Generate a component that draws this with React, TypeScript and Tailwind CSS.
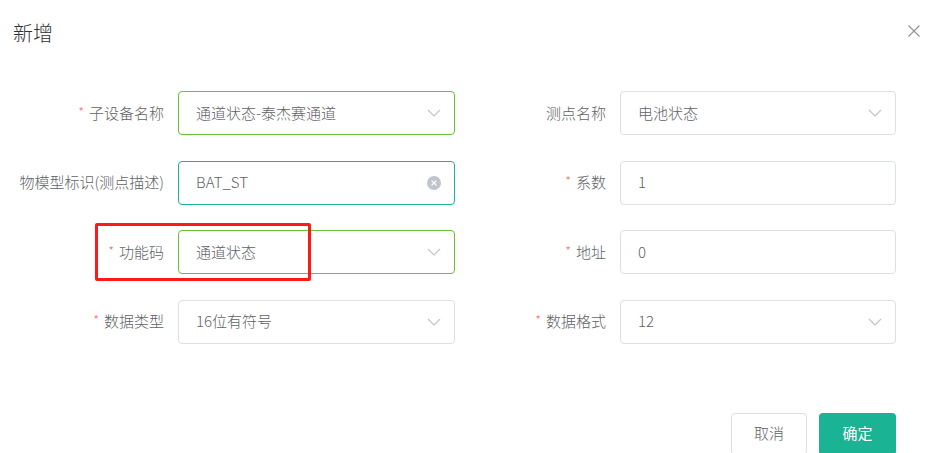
import React from 'react';

type Field = {
  label: string;
  value: string;
  required?: boolean;
  kind: 'select' | 'input' | 'clearable';
  border: string;
};

// left column then right column, row by row
const fields: Field[] = [
  { label: '子设备名称', value: '通道状态-泰杰赛通道', required: true, kind: 'select', border: 'border-[#67c23a]' },
  { label: '测点名称', value: '电池状态', kind: 'select', border: 'border-[#dcdfe6]' },
  { label: '物模型标识(测点描述)', value: 'BAT_ST', kind: 'clearable', border: 'border-[#1ab394]' },
  { label: '系数', value: '1', required: true, kind: 'input', border: 'border-[#dcdfe6]' },
  { label: '功能码', value: '通道状态', required: true, kind: 'select', border: 'border-[#67c23a]' },
  { label: '地址', value: '0', required: true, kind: 'input', border: 'border-[#dcdfe6]' },
  { label: '数据类型', value: '16位有符号', required: true, kind: 'select', border: 'border-[#dcdfe6]' },
  { label: '数据格式', value: '12', required: true, kind: 'select', border: 'border-[#dcdfe6]' },
];

const Chevron = () => (
  <svg width="14" height="8" viewBox="0 0 14 8" fill="none">
    <path d="M1 1l6 6 6-6" stroke="#c0c4cc" strokeWidth="1.2" />
  </svg>
);

const ClearIcon = () => (
  <svg width="14" height="14" viewBox="0 0 14 14">
    <circle cx="7" cy="7" r="7" fill="#c0c4cc" />
    <path d="M4.6 4.6l4.8 4.8M9.4 4.6l-4.8 4.8" stroke="#fff" strokeWidth="1.3" />
  </svg>
);

const FormField = ({ f }: { f: Field }) => (
  <>
    <div className="flex items-center justify-end pr-[14px] whitespace-nowrap text-[15px] font-light text-[#606266]">
      {f.required && <span className="text-[#f56c6c] text-[13px] mr-[5px] -mt-[3px]">*</span>}
      <span>{f.label}</span>
    </div>
    <div className={`h-[44px] flex items-center justify-between border ${f.border} rounded-[4px] pl-[17px] pr-[13px] text-[15px] font-light text-[#606266]`}>
      <span>{f.value}</span>
      {f.kind === 'select' && <Chevron />}
      {f.kind === 'clearable' && <ClearIcon />}
    </div>
  </>
);

const App: React.FC = () => {
  return (
    <div
      className="relative w-[932px] h-[453px] bg-white overflow-hidden"
      style={{ fontFamily: '"Noto Sans CJK SC", "Noto Sans", sans-serif' }}
    >
      {/* Header */}
      <div className="flex items-start justify-between pl-[13px] pr-[6px] pt-[19px]">
        <h2 className="text-[20px] leading-[28px] font-light text-[#303133]">新增</h2>
        <button className="p-[6px]">
          <svg width="12" height="12" viewBox="0 0 12 12">
            <path d="M0.5 0.5l11 11M11.5 0.5l-11 11" stroke="#909399" strokeWidth="1.1" />
          </svg>
        </button>
      </div>

      {/* Form */}
      <div className="grid grid-cols-[178px_277px_165px_276px] gap-y-[25.5px] mt-[44px]">
        {fields.map((f) => (
          <FormField key={f.label} f={f} />
        ))}
      </div>

      {/* Footer */}
      <div className="flex justify-end gap-[12px] pr-[36px] mt-[69px]">
        <button className="w-[76px] h-[42px] border border-[#dcdfe6] rounded-[4px] bg-white text-[15px] font-light text-[#606266]">
          取消
        </button>
        <button className="w-[77px] h-[42px] rounded-[4px] bg-[#1ab394] text-[15px] text-white">
          确定
        </button>
      </div>

      {/* Highlight box over 功能码 */}
      <div className="absolute left-[95px] top-[223px] w-[216px] h-[58px] border-[3px] border-[#ff1a1a] rounded-[2px]" />
    </div>
  );
};

export default App;
